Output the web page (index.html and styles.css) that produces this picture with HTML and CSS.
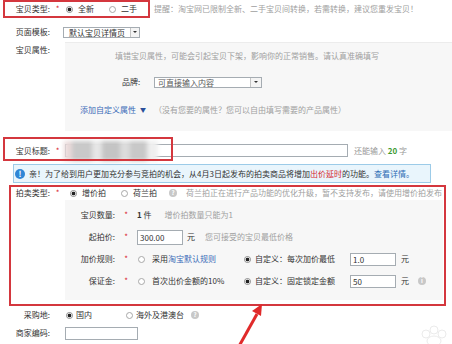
FILE: index.html
```html
<!DOCTYPE html>
<html lang="zh-CN">

    <head>
        <meta charset="utf-8">
        <title>发布宝贝</title>
        <link rel="stylesheet" href="styles.css">
    </head>

    <body>

        <div id="contents">

            <!-- 宝贝类型 -->
            <div class="row typeRow">
                <div class="markBox">
                    <div class="label short">宝贝类型:</div>
                    <div class="req">*</div>
                    <span class="choice first"><span class="radio on"></span>全新</span>
                    <span class="choice second"><span class="radio"></span>二手</span>
                </div>
                <div class="tip">提醒：淘宝网已限制全新、二手宝贝间转换，若需转换，建议您重发宝贝！</div>
            </div>

            <!-- 页面模板 -->
            <div class="row tplRow">
                <div class="label">页面模板:</div>
                <div class="req"></div>
                <div class="select tplSelect"><span class="selText">默认宝贝详情页</span><span class="selBtn"></span></div>
            </div>

            <!-- 宝贝属性 -->
            <div class="row attrRow">
                <div class="label">宝贝属性:</div>
                <div class="req"></div>
                <div class="attrPanel">
                    <div class="tip attrTip">填错宝贝属性，可能会引起宝贝下架，影响你的正常销售。请认真准确填写</div>
                    <div class="brandRow">
                        <span class="brandLabel">品牌:</span>
                        <div class="select brandSelect"><span class="selText">可直接输入内容</span><span class="selBtn"></span></div>
                    </div>
                    <div class="customRow">
                        <span class="link">添加自定义属性</span><span class="caret">▼</span>
                        <span class="tip">（没有您要的属性？您可以自由填写需要的产品属性）</span>
                    </div>
                </div>
            </div>

            <!-- 宝贝标题 -->
            <div class="row titleRow">
                <div class="label">宝贝标题:</div>
                <div class="req">*</div>
                <div class="titleInput"><div class="blur"></div></div>
                <span class="count">还能输入 <b>20</b> 字</span>
                <div class="markBox2"></div>
            </div>

            <!-- 提示 -->
            <div class="notice">
                <span class="infoIcon">!</span>
                <span class="noticeText">亲！为了给到用户更加充分参与竞拍的机会，从4月3日起发布的拍卖商品将增加<span class="hot">出价延时</span>的功能。<span class="more">查看详情。</span></span>
            </div>

            <!-- 拍卖 -->
            <div class="auction">
                <div class="row auctionRow">
                    <div class="label inBox">拍卖类型:</div>
                    <div class="req">*</div>
                    <span class="choice"><span class="radio on"></span>增价拍</span>
                    <span class="choice second"><span class="radio"></span>荷兰拍</span>
                    <span class="help">?</span>
                    <span class="tip">荷兰拍正在进行产品功能的优化升级，暂不支持发布，请使用增价拍发布</span>
                </div>

                <div class="bidPanel">
                    <div class="prow">
                        <div class="plabel">宝贝数量:</div>
                        <div class="preq">*</div>
                        <span class="qty"><b>1</b> 件</span>
                        <span class="tip">增价拍数量只能为1</span>
                    </div>
                    <div class="prow">
                        <div class="plabel">起拍价:</div>
                        <div class="preq">*</div>
                        <div class="field price">300.00</div>
                        <span class="unit">元</span>
                        <span class="tip">您可接受的宝贝最低价格</span>
                    </div>
                    <div class="prow">
                        <div class="plabel">加价规则:</div>
                        <div class="preq">*</div>
                        <span class="choice wide"><span class="radio"></span><span>采用<span class="link">淘宝默认规则</span></span></span>
                        <span class="choice custom"><span class="radio on"></span><span class="ruleText">自定义：每次加价最低</span></span>
                        <div class="field small">1.0</div>
                        <span class="unit">元</span>
                    </div>
                    <div class="prow">
                        <div class="plabel">保证金:</div>
                        <div class="preq">*</div>
                        <span class="choice wide"><span class="radio"></span>首次出价金额的10%</span>
                        <span class="choice custom"><span class="radio on"></span><span class="ruleText">自定义：固定锁定金额</span></span>
                        <div class="field small">50</div>
                        <span class="unit">元</span>
                        <span class="info">i</span>
                    </div>
                </div>
            </div>

            <!-- 采购地 -->
            <div class="row originRow">
                <div class="label">采购地:</div>
                <div class="req"></div>
                <span class="choice"><span class="radio on"></span>国内</span>
                <span class="choice abroad"><span class="radio"></span>海外及港澳台</span>
                <span class="help">?</span>
            </div>

            <!-- 商家编码 -->
            <div class="row codeRow">
                <div class="label">商家编码:</div>
                <div class="req"></div>
                <div class="codeInput"></div>
            </div>

        </div>

        <svg class="arrow" width="40" height="48" viewBox="0 0 40 48">
            <line x1="8" y1="50" x2="27" y2="16" stroke="#e02a2a" stroke-width="3"/>
            <polygon points="32,6 31,18 22,13" fill="#e02a2a"/>
        </svg>

        <svg class="watermark" width="60" height="20" viewBox="0 0 60 20">
            <circle cx="34" cy="10" r="4" fill="none" stroke="#ebebeb"/>
            <circle cx="42" cy="6" r="4" fill="none" stroke="#ebebeb"/>
            <circle cx="50" cy="10" r="4" fill="none" stroke="#ebebeb"/>
            <ellipse cx="42" cy="17" rx="7" ry="5" fill="none" stroke="#ebebeb"/>
        </svg>

    </body>

</html>
```

FILE: styles.css
```css
body
    {
        margin:       0;
        width:        452px;
        height:       344px;
        overflow:     hidden;
        position:     relative;
        background:   #fff;
        color:        #333;
        font-family:  "Noto Sans CJK SC", "Noto Sans", sans-serif;
        font-size:    8px;
        line-height:  12px;
    }

.row
    {
        display:      flex;
        align-items:  center;
        white-space:  nowrap;
    }

.label
    {
        width:        50px;
        flex:         none;
        text-align:   right;
    }

.label.short  { width: 45px; }
.label.inBox  { width: 39px; }

.req
    {
        width:        15px;
        flex:         none;
        text-align:   center;
        color:        #d9232d;
    }

.tip
    {
        color:        #a0a0a0;
        white-space:  nowrap;
    }

.link
    {
        color:        #3a6bb8;
    }

.choice
    {
        display:      flex;
        align-items:  center;
        gap:          5px;
        flex:         none;
    }

.radio
    {
        width:        7px;
        height:       7px;
        box-sizing:   border-box;
        border:       1px solid #a8a8a8;
        border-radius: 50%;
        background:   #fff;
        flex:         none;
    }

.radio.on
    {
        border-color: #8a8a8a;
        background:   radial-gradient(circle, #222 0 1.5px, #fff 2.2px);
    }

.help, .info
    {
        width:        8px;
        height:       8px;
        border-radius: 50%;
        background:   #c8c8c8;
        color:        #fff;
        font-size:    6px;
        line-height:  8px;
        text-align:   center;
        font-weight:  bold;
        flex:         none;
    }

/* 宝贝类型 */

.typeRow
    {
        height:       18px;
    }

.markBox
    {
        display:      flex;
        align-items:  center;
        height:       18px;
        box-sizing:   border-box;
        margin-left:  3px;
        padding-right: 11px;
        border:       2px solid #d4373e;
    }

.typeRow .choice.first   { margin-left: 1px; }
.typeRow .choice.second  { margin-left: 15px; }
.typeRow .tip            { margin-left: 4px; }

/* 页面模板 */

.tplRow
    {
        height:       20px;
        margin-top:   4px;
    }

.select
    {
        display:      flex;
        align-items:  center;
        height:       11px;
        box-sizing:   border-box;
        border:       1px solid #a5acb2;
        background:   #fff;
    }

.selText
    {
        flex:         1;
        padding-left: 5px;
        line-height:  9px;
    }

.selBtn
    {
        width:        9px;
        height:       9px;
        box-sizing:   border-box;
        border-left:  1px solid #c4c4c4;
        background:   #f4f4f4;
        display:      flex;
        align-items:  center;
        justify-content: center;
    }

.selBtn::after
    {
        content:      "";
        border-left:  2px solid transparent;
        border-right: 2px solid transparent;
        border-top:   2px solid #333;
    }

.tplSelect
    {
        width:        77px;
        margin-left:  -2px;
    }

/* 宝贝属性 */

.attrRow
    {
        align-items:  flex-start;
    }

.attrRow .label
    {
        padding-top:  2px;
    }

.attrPanel
    {
        flex:         1;
        height:       89px;
        box-sizing:   border-box;
        background:   #f7f7f7;
        border-top:   1px solid #ececec;
        padding-top:  7px;
    }

.attrTip
    {
        padding-left: 50px;
    }

.brandRow
    {
        display:      flex;
        align-items:  center;
        height:       20px;
        margin-top:   10px;
        padding-left: 57px;
    }

.brandLabel
    {
        width:        32px;
    }

.brandSelect
    {
        width:        108px;
    }

.brandSelect .selText
    {
        padding-left: 3px;
        color:        #555;
    }

.brandSelect .selBtn
    {
        width:        11px;
    }

.customRow
    {
        display:      flex;
        align-items:  center;
        height:       12px;
        margin-top:   12px;
        padding-left: 15px;
    }

.caret
    {
        color:        #2a4f9a;
        font-size:    6px;
        margin-left:  4px;
    }

.customRow .tip
    {
        margin-left:  8px;
    }

/* 宝贝标题 */

.titleRow
    {
        position:     relative;
        height:       24px;
        box-sizing:   border-box;
        margin-top:   6px;
        padding-top:  3px;
    }

.titleInput
    {
        position:     relative;
        width:        283px;
        height:       13px;
        box-sizing:   border-box;
        border:       1px solid #a5acb2;
        background:   #fff;
        flex:         none;
    }

.blur
    {
        position:     absolute;
        left:         -2px;
        top:          -4px;
        width:        94px;
        height:       20px;
        filter:       blur(2px);
        background:   linear-gradient(90deg, #eadada 0 8%, #c9c9c9 8% 30%, #e6e6e6 30% 40%, #c4c4c4 40% 60%, #dcdcdc 60% 70%, #c8c8c8 70% 88%, #efefef 88%);
    }

.count
    {
        margin-left:  6px;
        color:        #999;
    }

.count b
    {
        color:        #3c9a2f;
    }

.markBox2
    {
        position:     absolute;
        left:         3px;
        top:          0;
        width:        170px;
        height:       24px;
        box-sizing:   border-box;
        border:       2px solid #d4373e;
    }

/* 提示 */

.notice
    {
        display:      flex;
        align-items:  center;
        width:        418px;
        height:       19px;
        box-sizing:   border-box;
        margin:       3px 0 0 13px;
        border:       1px solid #9ccbe8;
        background:   #e9f5fc;
        white-space:  nowrap;
    }

.infoIcon
    {
        width:        10px;
        height:       10px;
        margin-left:  1px;
        border-radius: 50%;
        background:   #2f86d6;
        color:        #fff;
        font-weight:  bold;
        line-height:  10px;
        text-align:   center;
        flex:         none;
    }

.noticeText   { margin-left: 4px; }
.notice .hot  { color: #d6262c; }
.notice .more { color: #2e6cb5; }

/* 拍卖 */

.auction
    {
        width:        437px;
        height:       121px;
        box-sizing:   border-box;
        margin:       2px 0 0 9px;
        border:       2px solid #d4373e;
    }

.auctionRow
    {
        height:       12px;
    }

.auctionRow .choice          { margin-left: 5px; }
.auctionRow .choice.second   { margin-left: 15px; }
.auctionRow .help            { margin-left: 12px; }
.auctionRow .tip             { margin-left: 9px; }

.bidPanel
    {
        height:       100px;
        box-sizing:   border-box;
        margin:       1px 1px 0 54px;
        padding-top:  4px;
        background:   #f7f7f7;
    }

.prow
    {
        display:      flex;
        align-items:  center;
        height:       22px;
        white-space:  nowrap;
    }

.plabel
    {
        width:        50px;
        flex:         none;
        text-align:   right;
    }

.preq
    {
        width:        22px;
        flex:         none;
        text-align:   center;
        color:        #d9232d;
    }

.qty b        { font-weight: bold; }
.qty + .tip   { margin-left: 13px; }

.field
    {
        height:       15px;
        box-sizing:   border-box;
        border:       1px solid #a5acb2;
        background:   #fff;
        padding-left: 2px;
        line-height:  13px;
        flex:         none;
    }

.field.price  { width: 46px; }
.field.small  { width: 46px; height: 13px; line-height: 11px; }

.unit         { margin-left: 4px; }
.unit + .tip  { margin-left: 10px; }

.choice.wide
    {
        width:        106px;
        margin-left:  1px;
        gap:          7px;
    }

.choice.custom
    {
        gap:          4px;
    }

.ruleText
    {
        width:        95px;
    }

.prow .field.small + .unit { margin-left: 5px; }

.info
    {
        margin-left:  9px;
    }

/* 采购地 / 商家编码 */

.originRow
    {
        height:       18px;
    }

.originRow .choice          { margin-left: 1px; gap: 3px; }
.originRow .choice.abroad   { margin-left: 34px; }
.originRow .help            { margin-left: 7px; }

.codeRow
    {
        height:       18px;
    }

.codeInput
    {
        width:        73px;
        height:       13px;
        box-sizing:   border-box;
        border:       1px solid #a5acb2;
        background:   #fff;
    }

/* 标注 */

.arrow
    {
        position:     absolute;
        left:         230px;
        top:          298px;
    }

.watermark
    {
        position:     absolute;
        right:        0;
        bottom:       0;
    }
```
